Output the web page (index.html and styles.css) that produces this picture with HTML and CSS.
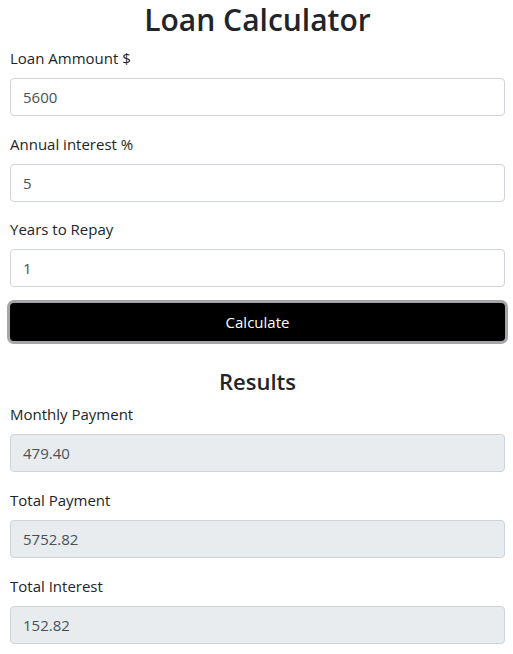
FILE: index.html
```html
<!DOCTYPE html>
<html>
<head>
<meta charset="utf-8">
<link rel="stylesheet" href="styles.css">
</head>
<body>
<div class="container">
  <h1 class="title">Loan Calculator</h1>
  <form class="form">
    <div class="group">
      <label class="label">Loan Ammount $</label>
      <input class="control" type="text" value="5600">
    </div>
    <div class="group">
      <label class="label">Annual interest %</label>
      <input class="control" type="text" value="5">
    </div>
    <div class="group">
      <label class="label">Years to Repay</label>
      <input class="control" type="text" value="1">
    </div>
    <button class="btn" type="button">Calculate</button>
  </form>
  <h3 class="results-title">Results</h3>
  <div class="group">
    <label class="label">Monthly Payment</label>
    <input class="control readonly" type="text" value="479.40" readonly>
  </div>
  <div class="group">
    <label class="label">Total Payment</label>
    <input class="control readonly" type="text" value="5752.82" readonly>
  </div>
  <div class="group">
    <label class="label">Total Interest</label>
    <input class="control readonly" type="text" value="152.82" readonly>
  </div>
</div>
</body>
</html>
```
FILE: styles.css
```css
* { box-sizing: border-box; }
html, body { margin: 0; padding: 0; background: #fff; }
body {
  font-family: "Open Sans", "Noto Sans", sans-serif;
  font-size: 16px;
  line-height: 1.5;
  color: #212529;
}
.container { padding: 0 8px 0 10px; }
.title {
  margin: 0 0 8px;
  padding-top: 1px;
  font-size: 30px;
  font-weight: 600;
  line-height: 37px;
  text-align: center;
}
.form { margin: 0; }
.group { margin-bottom: 16px; display: flex; flex-direction: column; }
.form .group:nth-child(2), .form .group:nth-child(3) { margin-top: -0.5px; }
.label {
  display: block;
  margin-bottom: 8px;
  font-size: 15px;
  line-height: 24px;
}
.control {
  display: block;
  width: 100%;
  height: 38px;
  padding: 6px 12px;
  font-family: inherit;
  font-size: 15px;
  color: #495057;
  background: #fff;
  border: 1px solid #ced4da;
  border-radius: 4px;
  outline: none;
}
.control.readonly { background: #e9ecef; }
.btn {
  display: block;
  width: 100%;
  height: 38px;
  margin-top: 1px;
  background: #000;
  color: #fff;
  border: none;
  border-radius: 4px;
  box-shadow: 0 0 0 3px #a3a5a9;
  font-family: inherit;
  font-size: 15px;
  padding: 0;
}
.results-title {
  margin: 26px 0 6px;
  font-size: 22px;
  font-weight: 600;
  line-height: 29px;
  text-align: center;
}
```
